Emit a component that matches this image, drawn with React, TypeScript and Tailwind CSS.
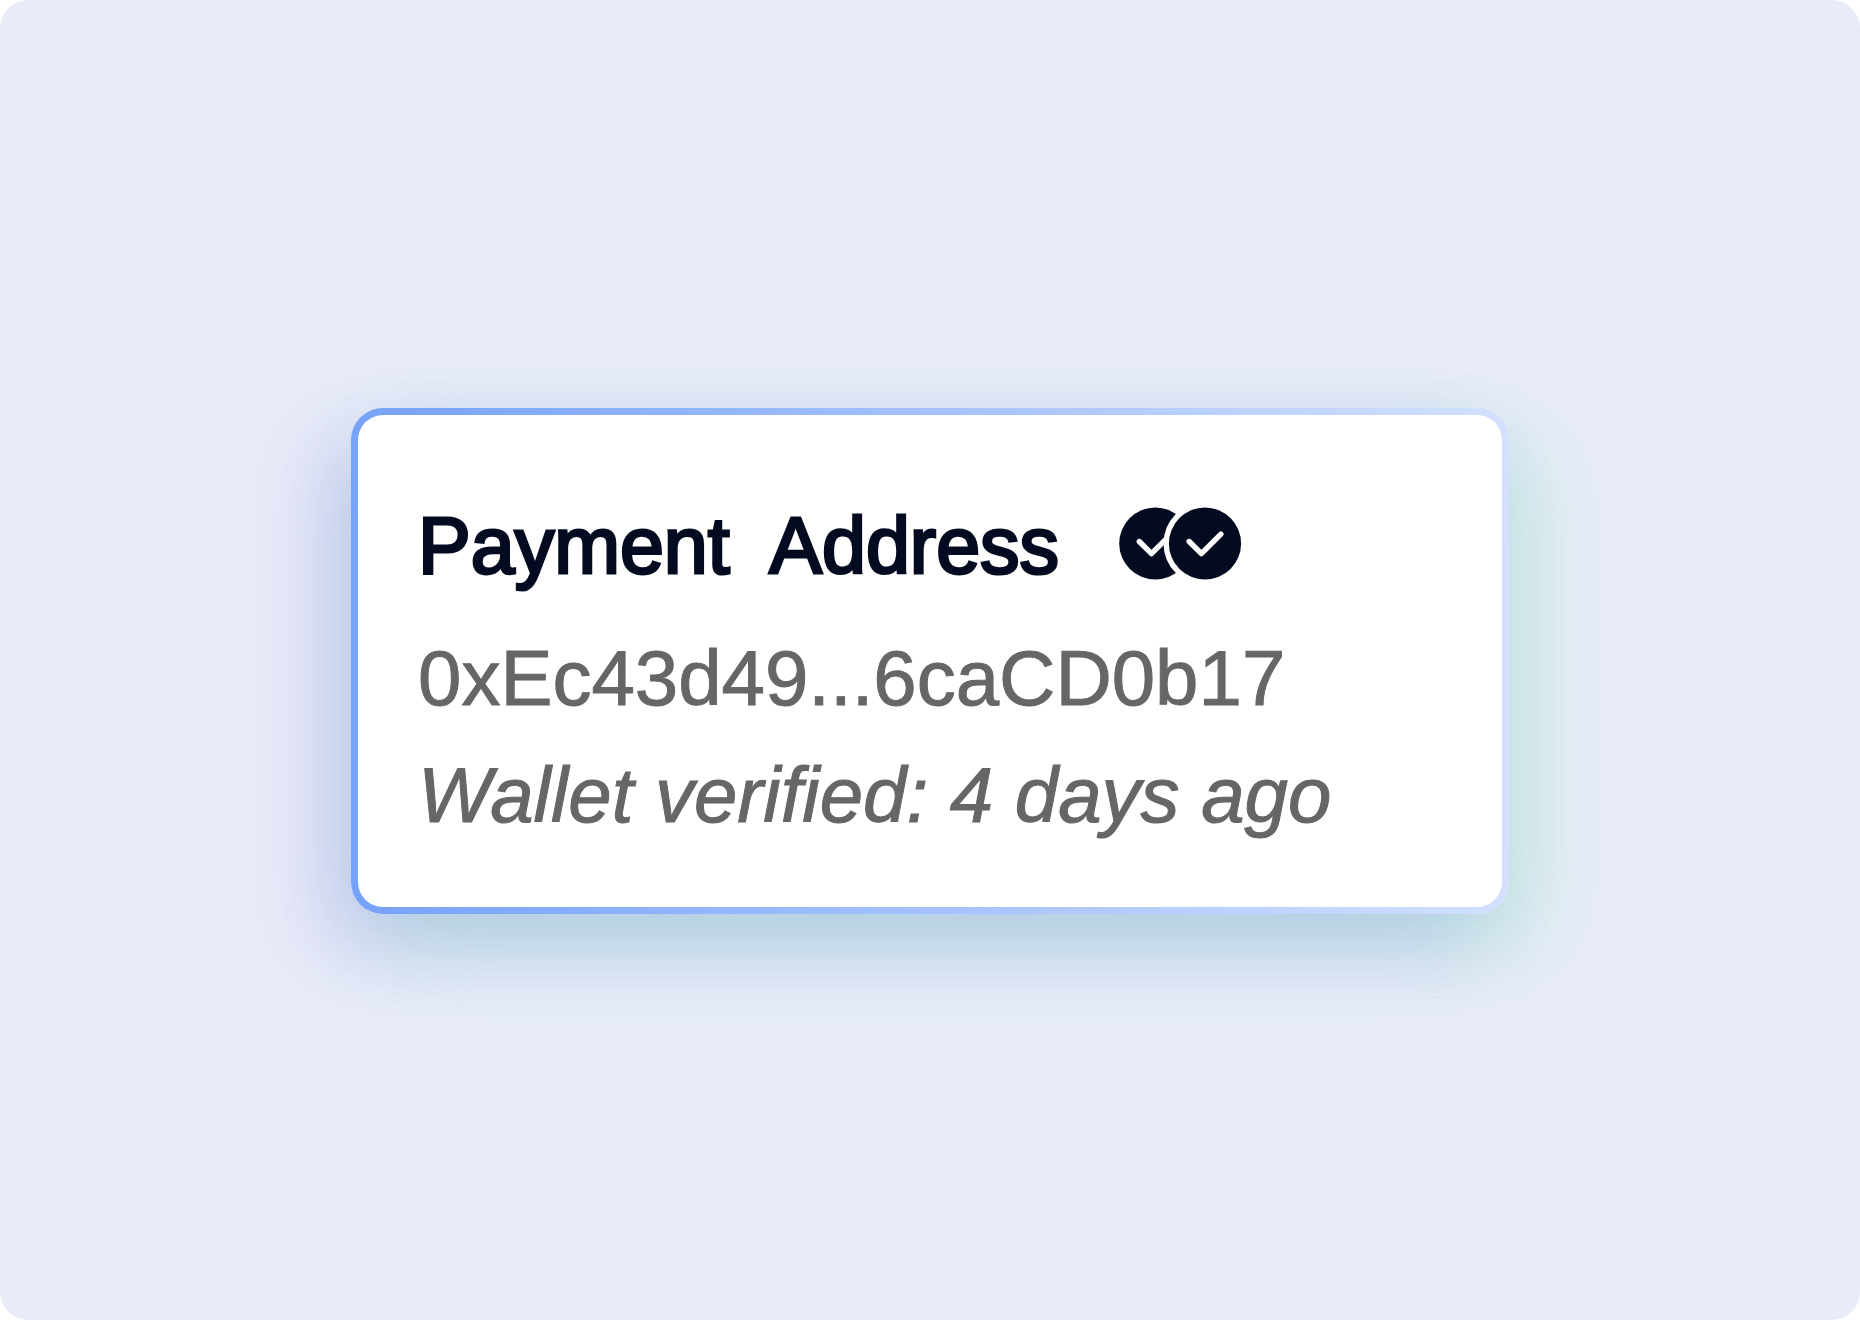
import React from "react";

interface PaymentAddress {
  label: string;
  address: string;
  verified: string;
}

const payment: PaymentAddress = {
  label: "Payment\u00a0 Address",
  address: "0xEc43d49...6caCD0b17",
  verified: "Wallet verified: 4 days ago",
};

function VerifiedBadges() {
  return (
    <svg
      className="h-[73px] w-[123px] shrink-0 mb-1"
      viewBox="0 0 123 73"
      fill="none"
      role="img"
      aria-label="Verified"
    >
      <circle cx="36.3" cy="36.5" r="36.1" fill="#040b20" />
      <path
        d="M20.3 34.5 32.5 46.7 52 27.2"
        stroke="#fff"
        strokeWidth="5.4"
        strokeLinecap="round"
        strokeLinejoin="round"
      />
      <circle cx="86" cy="36.5" r="41.5" fill="#fff" />
      <circle cx="86" cy="36.5" r="36.1" fill="#040b20" />
      <path
        d="M70.2 34.5 82.4 46.7 101.9 27.2"
        stroke="#fff"
        strokeWidth="5.4"
        strokeLinecap="round"
        strokeLinejoin="round"
      />
    </svg>
  );
}

export default function App() {
  return (
    <div className="min-h-screen bg-white font-['Liberation_Sans',Arial,sans-serif]">
      <main className="flex min-h-screen items-center justify-center overflow-hidden rounded-[28px] bg-[#e8ecf8] px-8 pt-0.5">
        {/* violet glow to the left, green to the right, teal below */}
        <section className="w-full max-w-[1158px] rounded-[32px] bg-linear-to-r from-[#76a2f9] to-[#d3e0ff] p-[7px] shadow-[-32px_32px_80px_rgb(97_71_208/0.18),36px_32px_80px_rgb(135_230_175/0.22),0_32px_76px_rgb(92_226_218/0.16)]">
          <div className="rounded-[25px] bg-white px-[60px] pt-[72px] pb-[53px] text-[78px] leading-[117px] text-[#666666] [-webkit-text-stroke:1px_#666666]">
            <div className="mb-4 flex items-center gap-15">
              <h1 className="text-[79px] text-[#040b20] [-webkit-text-stroke:3px_#040b20]">
                {payment.label}
              </h1>
              <VerifiedBadges />
            </div>
            <p>{payment.address}</p>
            <p className="italic">{payment.verified}</p>
          </div>
        </section>
      </main>
    </div>
  );
}
